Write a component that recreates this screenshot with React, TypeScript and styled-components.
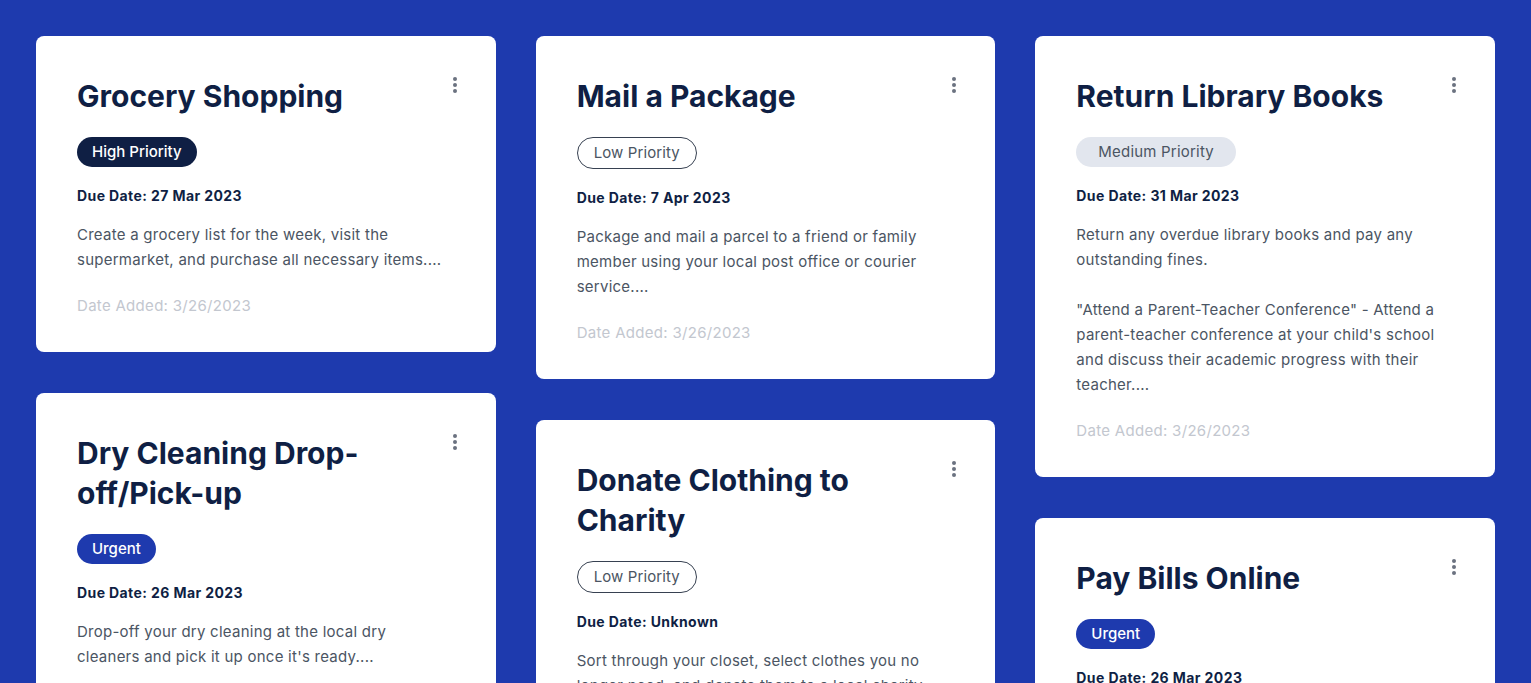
import styled, { createGlobalStyle, css } from "styled-components";

const GlobalStyle = createGlobalStyle`
  html, body {
    margin: 0;
    padding: 0;
    background-color: #1e3aae;
  }
  body {
    font-family: Inter, "Noto Sans", sans-serif;
  }
`;

type Priority = "High Priority" | "Low Priority" | "Medium Priority" | "Urgent";

type Task = {
  title: string;
  priority: Priority;
  due: string;
  description: string;
  added: string;
};

const columns: Task[][] = [
  [
    {
      title: "Grocery Shopping",
      priority: "High Priority",
      due: "27 Mar 2023",
      description:
        "Create a grocery list for the week, visit the supermarket, and purchase all necessary items....",
      added: "3/26/2023",
    },
    {
      title: "Dry Cleaning Drop-off/Pick-up",
      priority: "Urgent",
      due: "26 Mar 2023",
      description:
        "Drop-off your dry cleaning at the local dry cleaners and pick it up once it's ready....",
      added: "3/26/2023",
    },
  ],
  [
    {
      title: "Mail a Package",
      priority: "Low Priority",
      due: "7 Apr 2023",
      description:
        "Package and mail a parcel to a friend or family member using your local post office or courier service....",
      added: "3/26/2023",
    },
    {
      title: "Donate Clothing to Charity",
      priority: "Low Priority",
      due: "Unknown",
      description:
        "Sort through your closet, select clothes you no longer need, and donate them to a local charity....",
      added: "3/26/2023",
    },
  ],
  [
    {
      title: "Return Library Books",
      priority: "Medium Priority",
      due: "31 Mar 2023",
      description:
        'Return any overdue library books and pay any outstanding fines.\n\n"Attend a Parent-Teacher Conference" - Attend a parent-teacher conference at your child\'s school and discuss their academic progress with their teacher....',
      added: "3/26/2023",
    },
    {
      title: "Pay Bills Online",
      priority: "Urgent",
      due: "26 Mar 2023",
      description:
        "Log in to your online banking and pay all outstanding utility and credit card bills....",
      added: "3/26/2023",
    },
  ],
];

const Board = styled.main`
  display: flex;
  align-items: flex-start;
  gap: 40px;
  padding: 36px;
`;

const Column = styled.div`
  flex: 1;
  display: flex;
  flex-direction: column;
  gap: 41px;
  min-width: 0;
`;

const Card = styled.article`
  position: relative;
  background: #ffffff;
  border-radius: 8px;
  padding: 40px 40px 35px 41px;
`;

const MenuButton = styled.button`
  position: absolute;
  top: 39px;
  right: 31px;
  width: 20px;
  height: 20px;
  padding: 0;
  border: none;
  background: transparent;
  display: flex;
  align-items: center;
  justify-content: center;
  cursor: pointer;
`;

const Title = styled.h2`
  margin: 0;
  padding-right: 36px;
  font-size: 30px;
  line-height: 40px;
  font-weight: 700;
  letter-spacing: 0;
  color: #0f1f44;
`;

const badgeStyles: Record<Priority, ReturnType<typeof css>> = {
  "High Priority": css`
    padding: 4px 15px;
    background: #0f1f44;
    color: #ffffff;
    font-weight: 500;
  `,
  Urgent: css`
    padding: 4px 15px;
    background: #1e3aae;
    color: #ffffff;
    font-weight: 500;
  `,
  "Medium Priority": css`
    padding: 4px 22px;
    background: #e2e6ee;
    color: #4b5563;
    letter-spacing: 0.2px;
  `,
  "Low Priority": css`
    padding: 4px 16px;
    background: #ffffff;
    color: #4b5563;
    border: 1px solid #374151;
    letter-spacing: 0.1px;
  `,
};

const Badge = styled.span<{ $priority: Priority }>`
  display: inline-block;
  margin-top: 21px;
  border-radius: 999px;
  font-size: 15px;
  line-height: 22px;
  font-weight: 400;
  ${({ $priority }) => badgeStyles[$priority]}
`;

const DueDate = styled.p`
  margin: 18px 0 0;
  font-size: 14px;
  line-height: 22px;
  font-weight: 700;
  letter-spacing: 0.4px;
  color: #0f1f44;
`;

const Description = styled.p`
  margin: 15px 0 0;
  padding-right: 6px;
  font-size: 15px;
  line-height: 25px;
  letter-spacing: 0.25px;
  color: #4b5563;
  white-space: pre-line;
`;

const Added = styled.p`
  margin: 23px 0 0;
  font-size: 15px;
  line-height: 22px;
  letter-spacing: 0.3px;
  color: #c3c7cf;
`;

function DotsIcon() {
  return (
    <svg width="20" height="20" viewBox="0 0 20 20" fill="#6b7280">
      <circle cx="10" cy="4" r="2" />
      <circle cx="10" cy="10" r="2" />
      <circle cx="10" cy="16" r="2" />
    </svg>
  );
}

function TaskCard({ task }: { task: Task }) {
  return (
    <Card>
      <MenuButton aria-label="More options">
        <DotsIcon />
      </MenuButton>
      <Title>{task.title}</Title>
      <Badge $priority={task.priority}>{task.priority}</Badge>
      <DueDate>Due Date: {task.due}</DueDate>
      <Description>{task.description}</Description>
      <Added>Date Added: {task.added}</Added>
    </Card>
  );
}

export default function App() {
  return (
    <>
      <GlobalStyle />
      <Board>
        {columns.map((col, i) => (
          <Column key={i}>
            {col.map((task) => (
              <TaskCard key={task.title} task={task} />
            ))}
          </Column>
        ))}
      </Board>
    </>
  );
}
